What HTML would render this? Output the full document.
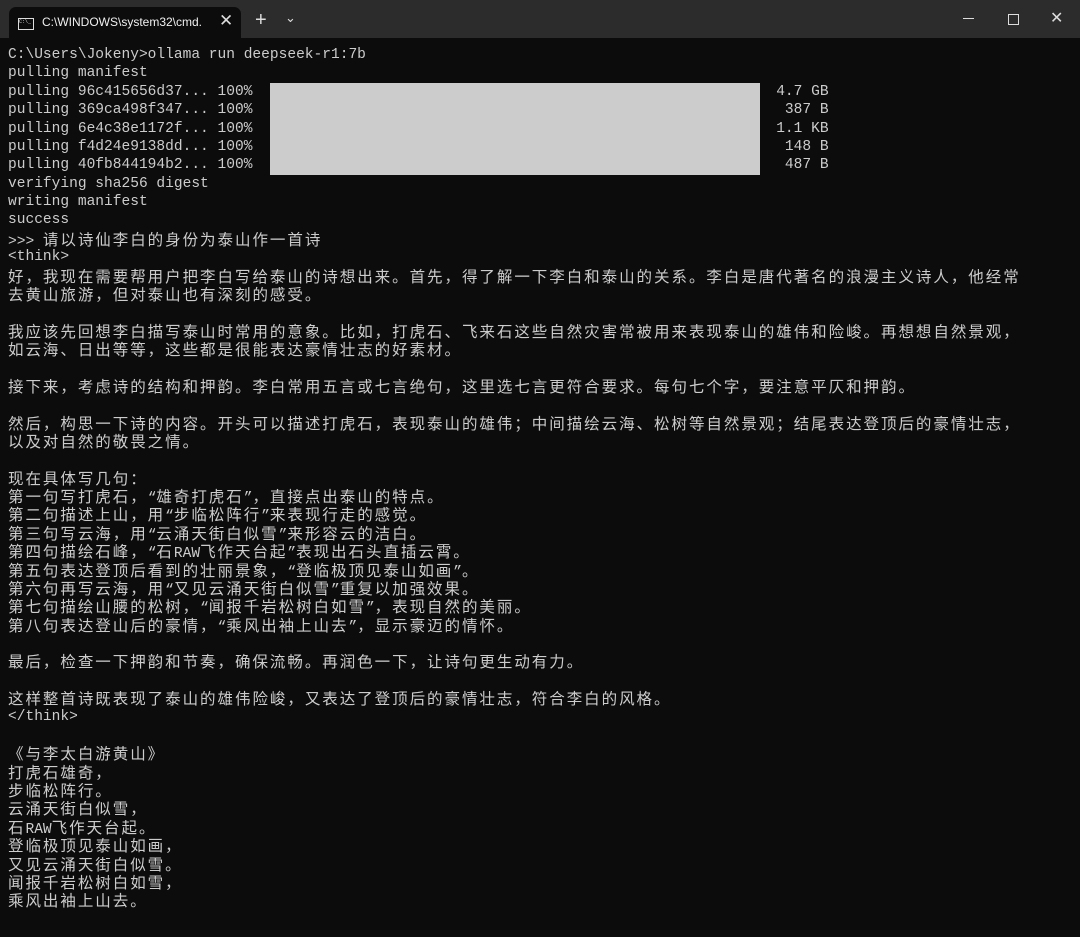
<!DOCTYPE html>
<html><head><meta charset="utf-8"><style>
html,body{margin:0;padding:0;background:#0c0c0c;}
body{width:1080px;height:937px;overflow:hidden;position:relative;}
#tb{position:absolute;left:0;top:0;width:1080px;height:38px;background:#2c2c2c;}
#tab{position:absolute;left:9px;top:7px;width:232px;height:31px;background:#0c0c0c;border-radius:7px 7px 0 0;}
#tab .ic{position:absolute;left:9px;top:11px;width:14px;height:10px;border:1px solid #ddd;font:5px "Liberation Mono",monospace;color:#ddd;}
#tab .t{position:absolute;left:33px;top:8px;font:12px "Liberation Sans",sans-serif;color:#f0f0f0;white-space:nowrap;width:160px;overflow:hidden;}
#tab .x{position:absolute;left:210px;top:4px;color:#ddd;font:17px "Liberation Sans",sans-serif;}
.tbtxt{position:absolute;color:#ddd;font:20px "Liberation Sans",sans-serif;}
#term{position:absolute;left:8px;top:46px;font:14.55px/18.39px "Liberation Mono",monospace;color:#cccccc;white-space:pre;}
#term .l{height:18.39px;overflow:visible;white-space:pre;}
.c{font-family:"Noto Sans CJK SC",sans-serif;font-size:15.5px;letter-spacing:1.96px;line-height:18px;}
#bar{position:absolute;left:270px;top:83px;width:490px;height:92px;background:#cccccc;}
</style></head><body>
<div id="tb">
<div id="tab"><div class="ic">C:\_</div><div class="t">C:\WINDOWS\system32\cmd.</div><div class="x">✕</div></div>
<div class="tbtxt" style="left:255px;top:9px;">+</div>
<div class="tbtxt" style="left:285px;top:10px;font-size:13px;">⌄</div>
<div style="position:absolute;left:963px;top:18px;width:11px;height:1px;background:#ddd"></div>
<div style="position:absolute;left:1008px;top:14px;width:9px;height:9px;border:1px solid #ddd"></div>
<div class="tbtxt" style="left:1050px;top:8px;font-size:16px;">✕</div>
</div>
<div id="bar"></div>
<div id="term">C:\Users\Jokeny&gt;ollama run deepseek-r1:7b
pulling manifest
pulling 96c415656d37... 100%                                                            4.7 GB
pulling 369ca498f347... 100%                                                             387 B
pulling 6e4c38e1172f... 100%                                                            1.1 KB
pulling f4d24e9138dd... 100%                                                             148 B
pulling 40fb844194b2... 100%                                                             487 B
verifying sha256 digest
writing manifest
success
&gt;&gt;&gt; 请以诗仙李白的身份为泰山作一首诗
&lt;think&gt;
好，我现在需要帮用户把李白写给泰山的诗想出来。首先，得了解一下李白和泰山的关系。李白是唐代著名的浪漫主义诗人，他经常
去黄山旅游，但对泰山也有深刻的感受。

我应该先回想李白描写泰山时常用的意象。比如，打虎石、飞来石这些自然灾害常被用来表现泰山的雄伟和险峻。再想想自然景观，
如云海、日出等等，这些都是很能表达豪情壮志的好素材。

接下来，考虑诗的结构和押韵。李白常用五言或七言绝句，这里选七言更符合要求。每句七个字，要注意平仄和押韵。

然后，构思一下诗的内容。开头可以描述打虎石，表现泰山的雄伟；中间描绘云海、松树等自然景观；结尾表达登顶后的豪情壮志，
以及对自然的敬畏之情。

现在具体写几句：
第一句写打虎石，“雄奇打虎石”，直接点出泰山的特点。
第二句描述上山，用“步临松阵行”来表现行走的感觉。
第三句写云海，用“云涌天街白似雪”来形容云的洁白。
第四句描绘石峰，“石RAW飞作天台起”表现出石头直插云霄。
第五句表达登顶后看到的壮丽景象，“登临极顶见泰山如画”。
第六句再写云海，用“又见云涌天街白似雪”重复以加强效果。
第七句描绘山腰的松树，“闻报千岩松树白如雪”，表现自然的美丽。
第八句表达登山后的豪情，“乘风出袖上山去”，显示豪迈的情怀。

最后，检查一下押韵和节奏，确保流畅。再润色一下，让诗句更生动有力。

这样整首诗既表现了泰山的雄伟险峻，又表达了登顶后的豪情壮志，符合李白的风格。
&lt;/think&gt;

《与李太白游黄山》
打虎石雄奇，
步临松阵行。
云涌天街白似雪，
石RAW飞作天台起。
登临极顶见泰山如画，
又见云涌天街白似雪。
闻报千岩松树白如雪，
乘风出袖上山去。</div>
<script>
(function(){
var t=document.getElementById('term');
var lines=t.textContent.split('\n');
t.textContent='';
lines.forEach(function(s){
 var d=document.createElement('div');d.className='l';
 var buf='',cj=false;
 function flush(){if(!buf)return;if(cj){var sp=document.createElement('span');sp.className='c';sp.textContent=buf;d.appendChild(sp);}else d.appendChild(document.createTextNode(buf));buf='';}
 for(var i=0;i<s.length;i++){var ch=s[i],c=ch.charCodeAt(0)>=0x2E80&&ch!=='“'&&ch!=='”';if(c!==cj){flush();cj=c;}buf+=ch;}
 flush();
 if(!s.length)d.appendChild(document.createTextNode(' '));
 t.appendChild(d);
});
})();
</script>
</body></html>
